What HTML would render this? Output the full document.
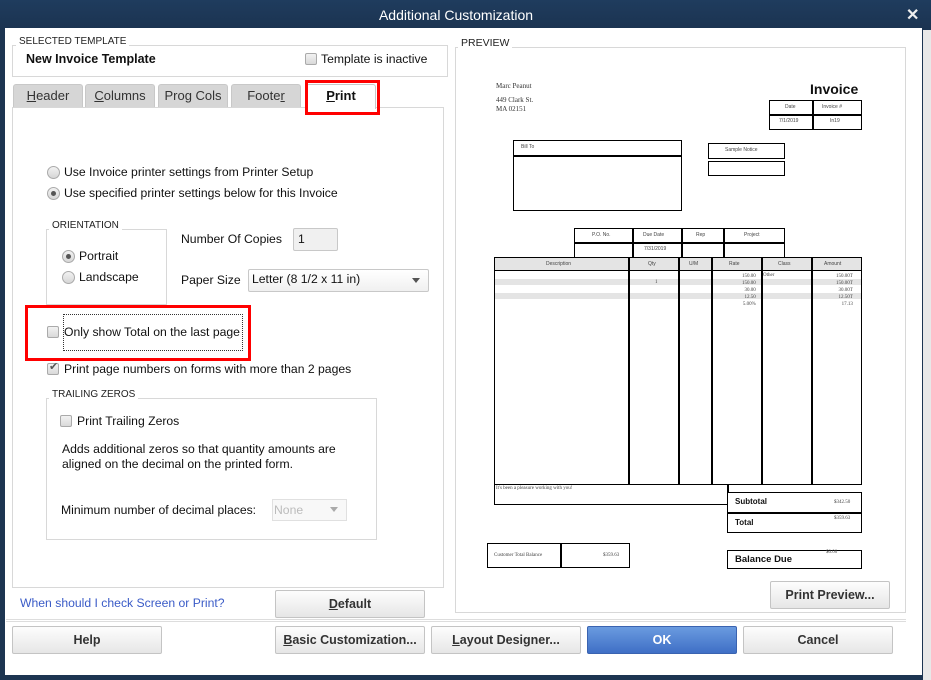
<!DOCTYPE html>
<html><head><style>
*{margin:0;padding:0;box-sizing:border-box}
body{width:931px;height:680px;overflow:hidden;background:#1d3551;font-family:"Liberation Sans",sans-serif;font-size:12px;color:#111;position:relative}
.a{position:absolute}
.t{position:absolute;white-space:nowrap}
.grp{position:absolute;border:1px solid #d8d8d8}
.lbl{position:absolute;background:#fff;font-size:10px;padding:0 3px;color:#222}
.cb{position:absolute;width:12px;height:12px;border:1px solid #aaa;border-radius:2px;background:linear-gradient(#f2f2f2,#d9d9d9)}
.rd{position:absolute;width:13px;height:13px;border:1px solid #aaa;border-radius:50%;background:linear-gradient(#f2f2f2,#d6d6d6)}
.rd.on::after{content:"";position:absolute;left:3px;top:3px;width:5px;height:5px;border-radius:50%;background:#555}
.tab{position:absolute;top:84px;height:23px;background:#d6d6d6;border:1px solid #c8c8c8;border-bottom:none;border-radius:3px 3px 0 0;text-align:center;line-height:22px;font-size:13px;color:#333}
.btn{position:absolute;height:28px;border:1px solid #c4c4c4;border-radius:2px;background:linear-gradient(#fdfdfd,#e6e6e6);text-align:center;line-height:26px;font-weight:bold;font-size:12.5px;color:#333}
.red{position:absolute;border:3px solid #f00}
.bx{position:absolute;border:1.5px solid #000}
.s{position:absolute;font-size:5px;color:#444;white-space:nowrap}
.se{position:absolute;font-family:"Liberation Serif",serif;color:#333;white-space:nowrap}
.o{font-size:12.2px}
</style></head><body>
<div class="a" style="left:0;top:0;width:931px;height:30px;background:linear-gradient(#1f3c5e,#1b3350)"></div>
<div class="t" style="left:0;width:912px;top:7px;text-align:center;color:#fff;font-size:14px">Additional Customization</div>
<div class="t" style="left:906px;top:5px;color:#eee;font-size:16px;font-weight:bold">✕</div>
<div class="a" style="left:923px;top:30px;width:8px;height:650px;background:#e8e8e8"></div>
<div class="a" style="left:5px;top:28px;width:917px;height:647px;background:#fff"></div>

<div class="grp" style="left:12px;top:45px;width:436px;height:32px"></div>
<div class="lbl" style="left:16px;top:36px">SELECTED TEMPLATE</div>
<div class="t" style="left:26px;top:52px;font-weight:bold;font-size:12.5px">New Invoice Template</div>
<div class="cb" style="left:305px;top:53px"></div>
<div class="t o" style="left:321px;top:52px">Template is inactive</div>

<div class="a" style="left:12px;top:107px;width:432px;height:481px;border:1px solid #d8d8d8"></div>
<div class="tab" style="left:13px;width:70px"><u>H</u>eader</div>
<div class="tab" style="left:85px;width:70px"><u>C</u>olumns</div>
<div class="tab" style="left:158px;width:70px">Pro<u>g</u> Cols</div>
<div class="tab" style="left:231px;width:70px">Foote<u>r</u></div>
<div class="tab" style="left:306px;width:70px;height:25px;background:#fff;font-weight:bold;color:#111"><u>P</u>rint</div>
<div class="red" style="left:305px;top:80px;width:75px;height:35px"></div>

<div class="rd" style="left:47px;top:166px"></div>
<div class="t o" style="left:64px;top:165px">Use Invoice printer settings from Printer Setup</div>
<div class="rd on" style="left:47px;top:187px"></div>
<div class="t o" style="left:64px;top:186px">Use specified printer settings below for this Invoice</div>

<div class="grp" style="left:46px;top:229px;width:121px;height:76px"></div>
<div class="lbl" style="left:49px;top:220px">ORIENTATION</div>
<div class="rd on" style="left:62px;top:250px"></div>
<div class="t o" style="left:79px;top:249px">Portrait</div>
<div class="rd" style="left:62px;top:271px"></div>
<div class="t o" style="left:79px;top:270px">Landscape</div>

<div class="t o" style="left:181px;top:232px">Number Of Copies</div>
<div class="a" style="left:293px;top:228px;width:45px;height:23px;border:1px solid #c8c8c8;border-radius:2px;background:#f0f0f0"></div>
<div class="t o" style="left:298px;top:232px">1</div>
<div class="t o" style="left:181px;top:273px">Paper Size</div>
<div class="a" style="left:248px;top:269px;width:181px;height:23px;border:1px solid #c8c8c8;border-radius:2px;background:linear-gradient(#fff,#f0f0f0)"></div>
<div class="t o" style="left:252px;top:272px">Letter (8 1/2 x 11 in)</div>
<div class="a" style="left:412px;top:278px;border:4px solid transparent;border-top:5px solid #555"></div>

<div class="red" style="left:25px;top:305px;width:226px;height:56px"></div>
<div class="cb" style="left:47px;top:326px"></div>
<div class="a" style="left:63px;top:314px;width:180px;height:37px;border:1px dotted #333"></div>
<div class="t o" style="left:64px;top:325px">Only show Total on the last page</div>
<div class="cb" style="left:47px;top:363px"></div>
<div class="t" style="left:49px;top:360px;font-size:11px;color:#555">✔</div>
<div class="t o" style="left:64px;top:362px">Print page numbers on forms with more than 2 pages</div>

<div class="grp" style="left:46px;top:398px;width:331px;height:142px"></div>
<div class="lbl" style="left:49px;top:389px">TRAILING ZEROS</div>
<div class="cb" style="left:60px;top:415px"></div>
<div class="t o" style="left:77px;top:414px">Print Trailing Zeros</div>
<div class="t o" style="left:62px;top:442px;line-height:15px">Adds additional zeros so that quantity amounts are<br>aligned on the decimal on the printed form.</div>
<div class="t o" style="left:61px;top:503px">Minimum number of decimal places:</div>
<div class="a" style="left:272px;top:499px;width:75px;height:22px;border:1px solid #e0e0e0;background:#f8f8f8"></div>
<div class="t o" style="left:274px;top:503px;color:#bbb">None</div>
<div class="a" style="left:330px;top:507px;border:4px solid transparent;border-top:5px solid #aaa"></div>

<div class="t o" style="left:20px;top:596px;color:#3a5bc7">When should I check Screen or Print?</div>
<div class="btn" style="left:275px;top:590px;width:150px"><u>D</u>efault</div>
<div class="a" style="left:6px;top:619px;width:446px;height:3px;border-top:1px solid #ddd;border-bottom:1px solid #ddd"></div>

<!-- preview -->
<div class="grp" style="left:455px;top:47px;width:451px;height:566px"></div>
<div class="lbl" style="left:458px;top:37px;font-size:10.5px">PREVIEW</div>
<div class="se" style="left:496px;top:82px;font-size:7px">Marc Peanut</div>
<div class="se" style="left:496px;top:96px;font-size:7px;line-height:9px">449 Clark St.<br>MA 02151</div>
<div class="t" style="left:810px;top:81px;font-size:14px;font-weight:bold">Invoice</div>
<div class="bx" style="left:769px;top:100px;width:93px;height:30px"></div>
<div class="a" style="left:769px;top:114px;width:93px;height:1.5px;background:#000"></div>
<div class="a" style="left:812px;top:100px;width:1.5px;height:30px;background:#000"></div>
<div class="s" style="left:785px;top:104px">Date</div><div class="s" style="left:822px;top:104px">Invoice #</div>
<div class="s" style="left:779px;top:118px">7/1/2019</div><div class="s" style="left:830px;top:118px">In19</div>
<div class="bx" style="left:513px;top:140px;width:169px;height:71px"></div>
<div class="a" style="left:513px;top:155px;width:169px;height:1.5px;background:#000"></div>
<div class="s" style="left:521px;top:144px">Bill To</div>
<div class="bx" style="left:708px;top:143px;width:77px;height:16px"></div>
<div class="s" style="left:725px;top:147px">Sample Notice</div>
<div class="bx" style="left:708px;top:161px;width:77px;height:15px"></div>
<div class="bx" style="left:574px;top:228px;width:211px;height:30px"></div>
<div class="a" style="left:574px;top:242px;width:211px;height:1.5px;background:#000"></div>
<div class="a" style="left:632px;top:228px;width:1.5px;height:30px;background:#000"></div>
<div class="a" style="left:681px;top:228px;width:1.5px;height:30px;background:#000"></div>
<div class="a" style="left:723px;top:228px;width:1.5px;height:30px;background:#000"></div>
<div class="s" style="left:592px;top:232px">P.O. No.</div><div class="s" style="left:643px;top:232px">Due Date</div><div class="s" style="left:696px;top:232px">Rep</div><div class="s" style="left:744px;top:232px">Project</div>
<div class="s" style="left:644px;top:246px">7/31/2019</div>
<div class="bx" style="left:494px;top:257px;width:368px;height:228px"></div>
<div class="a" style="left:495px;top:258px;width:366px;height:13px;background:#e4e4e4;border-bottom:1.5px solid #000"></div>
<div class="a" style="left:495px;top:279px;width:366px;height:6px;background:#e4e4e4"></div>
<div class="a" style="left:495px;top:293px;width:366px;height:6px;background:#e4e4e4"></div>
<div class="a" style="left:628px;top:257px;width:1.5px;height:228px;background:#000"></div>
<div class="a" style="left:678px;top:257px;width:1.5px;height:228px;background:#000"></div>
<div class="a" style="left:711px;top:257px;width:1.5px;height:228px;background:#000"></div>
<div class="a" style="left:761px;top:257px;width:1.5px;height:228px;background:#000"></div>
<div class="a" style="left:811px;top:257px;width:1.5px;height:228px;background:#000"></div>
<div class="s" style="left:546px;top:261px">Description</div><div class="s" style="left:648px;top:261px">Qty</div><div class="s" style="left:689px;top:261px">U/M</div><div class="s" style="left:729px;top:261px">Rate</div><div class="s" style="left:778px;top:261px">Class</div><div class="s" style="left:824px;top:261px">Amount</div>
<div class="s" style="left:742px;top:273px;line-height:7px;text-align:right;font-family:'Liberation Serif',serif">150.00<br>150.00<br>30.00<br>12.50<br>5.00%</div>
<div class="s" style="left:763px;top:273px;font-family:'Liberation Serif',serif">Other</div>
<div class="s" style="left:655px;top:280px;font-family:'Liberation Serif',serif">1</div>
<div class="s" style="left:836px;top:273px;line-height:7px;text-align:right;font-family:'Liberation Serif',serif">150.00T<br>150.00T<br>30.00T<br>12.50T<br>17.13</div>
<div class="bx" style="left:494px;top:484px;width:234px;height:21px"></div>
<div class="s" style="left:496px;top:486px;font-family:'Liberation Serif',serif">It's been a pleasure working with you!</div>
<div class="a" style="left:727px;top:484px;width:1.5px;height:9px;background:#000"></div>
<div class="bx" style="left:727px;top:492px;width:135px;height:41px"></div>
<div class="a" style="left:727px;top:512px;width:135px;height:1.5px;background:#000"></div>
<div class="t" style="left:735px;top:497px;font-size:8px;font-weight:bold">Subtotal</div>
<div class="t" style="left:735px;top:518px;font-size:8px;font-weight:bold">Total</div>
<div class="s" style="left:834px;top:500px;font-family:'Liberation Serif',serif">$342.50</div>
<div class="s" style="left:834px;top:516px;font-family:'Liberation Serif',serif">$359.63</div>
<div class="bx" style="left:487px;top:543px;width:143px;height:25px"></div>
<div class="a" style="left:560px;top:543px;width:1.5px;height:25px;background:#000"></div>
<div class="s" style="left:494px;top:553px;font-family:'Liberation Serif',serif">Customer Total Balance</div>
<div class="s" style="left:603px;top:553px;font-family:'Liberation Serif',serif">$359.63</div>
<div class="bx" style="left:727px;top:550px;width:135px;height:19px"></div>
<div class="t" style="left:735px;top:554px;font-size:9.5px;font-weight:bold">Balance Due</div>
<div class="s" style="left:826px;top:550px;font-family:'Liberation Serif',serif">$0.00</div>
<div class="btn" style="left:770px;top:581px;width:120px">Print Preview...</div>
<div class="a" style="left:452px;top:619px;width:454px;height:3px;border-top:1px solid #ddd;border-bottom:1px solid #ddd"></div>

<div class="btn" style="left:12px;top:626px;width:150px">Help</div>
<div class="btn" style="left:275px;top:626px;width:150px"><u>B</u>asic Customization...</div>
<div class="btn" style="left:431px;top:626px;width:150px"><u>L</u>ayout Designer...</div>
<div class="btn" style="left:587px;top:626px;width:150px;background:linear-gradient(#6a9be0,#3f6fc6);border-color:#3a63b0;color:#fff">OK</div>
<div class="btn" style="left:743px;top:626px;width:150px">Cancel</div>
</body></html>
